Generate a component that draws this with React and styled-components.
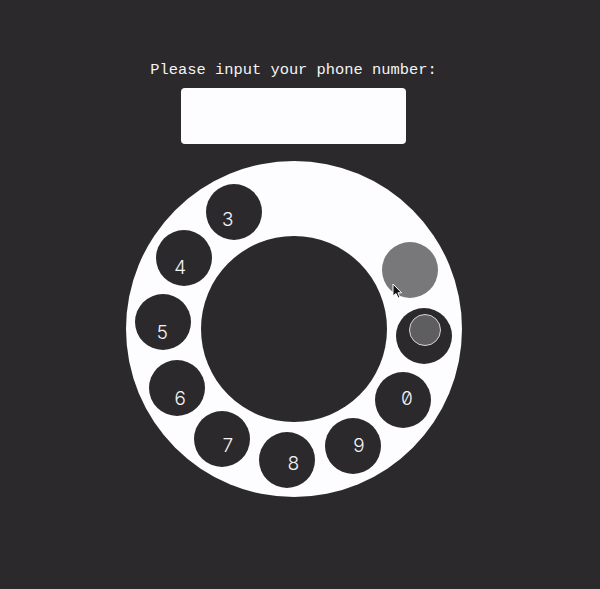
import React from "react";
import styled, { createGlobalStyle } from "styled-components";

const Global = createGlobalStyle`
  html, body { margin: 0; padding: 0; background: #2b292c; }
  body { font-family: "Liberation Mono", "DejaVu Sans Mono", monospace; }
`;

const Page = styled.main`
  width: 587px;
  min-height: 589px;
  display: flex;
  flex-direction: column;
  align-items: center;
  padding-top: 61px;
  box-sizing: border-box;
`;

const Prompt = styled.label`
  color: #f4f3f5;
  font-size: 15.4px;
  line-height: 18px;
  letter-spacing: 0;
  white-space: pre;
`;

const NumberInput = styled.input`
  margin-top: 9px;
  width: 225px;
  height: 56px;
  box-sizing: border-box;
  border: none;
  border-radius: 4px;
  background: #fdfcfe;
  outline: none;
  font-family: inherit;
  font-size: 20px;
  text-align: center;
  color: #2b292c;
`;

const Dial = styled.div`
  margin-top: 17px;
  position: relative;
  width: 336px;
  height: 336px;
  border-radius: 50%;
  background: #fdfcfe;
  display: grid;
  place-items: center;
`;

const Hub = styled.div`
  width: 186px;
  height: 186px;
  border-radius: 50%;
  background: #2b292c;
`;

const Hole = styled.div`
  position: absolute;
  width: 56px;
  height: 56px;
  margin: -28px 0 0 -28px;
  border-radius: 50%;
  background: ${(p) => (p.$active ? "#787779" : "#2b292c")};
  display: grid;
  place-items: center;
`;

const StopKnob = styled.div`
  width: 30px;
  height: 30px;
  border-radius: 50%;
  background: #5e5d5f;
  border: 1px solid #d4d3d5;
  transform: translate(1px, -6px);
`;

const Digit = styled.span`
  position: absolute;
  transform: translate(-50%, -50%);
  color: #f4f3f5;
  font-family: Inter, "DejaVu Sans Mono", monospace;
  font-weight: 300;
  font-size: 19px;
  line-height: 1;
  font-feature-settings: "zero" 1, "tnum" 1;
  pointer-events: none;
`;

const Cursor = styled.svg`
  position: absolute;
  width: 11px;
  height: 16px;
  pointer-events: none;
`;

const C = 168;
const R = 131;
const digits = ["0", "9", "8", "7", "6", "5", "4", "3"];
const labelAngles = [30, 60, 90, 120, 150, 180, 210, 240];
const rot = 3;

const pos = (deg, r, dy = 0) => {
  const a = (deg * Math.PI) / 180;
  return { left: C + r * Math.cos(a), top: C + r * Math.sin(a) + dy };
};

export default function App() {
  return (
    <>
      <Global />
      <Page>
        <Prompt htmlFor="phone">Please input your phone number:</Prompt>
        <NumberInput id="phone" type="tel" />
        <Dial>
          <Hub />
          {labelAngles.map((a) => (
            <Hole key={"h" + a} style={pos(a + rot, R)} />
          ))}
          <Hole $active style={pos(333, R)} />
          <Hole style={pos(3, R)}>
            <StopKnob />
          </Hole>
          {digits.map((d, i) => (
            <Digit key={d} style={pos(labelAngles[i], R, 3)}>
              {d}
            </Digit>
          ))}
          <Cursor viewBox="0 0 11 16" style={{ left: 266, top: 122 }}>
            <path
              d="M1 1 L1 13 L4 10.5 L6.2 15 L8 14.2 L5.9 9.8 L9.6 9.8 Z"
              fill="#111"
              stroke="#fff"
              strokeWidth="1"
              strokeLinejoin="round"
            />
          </Cursor>
        </Dial>
      </Page>
    </>
  );
}
